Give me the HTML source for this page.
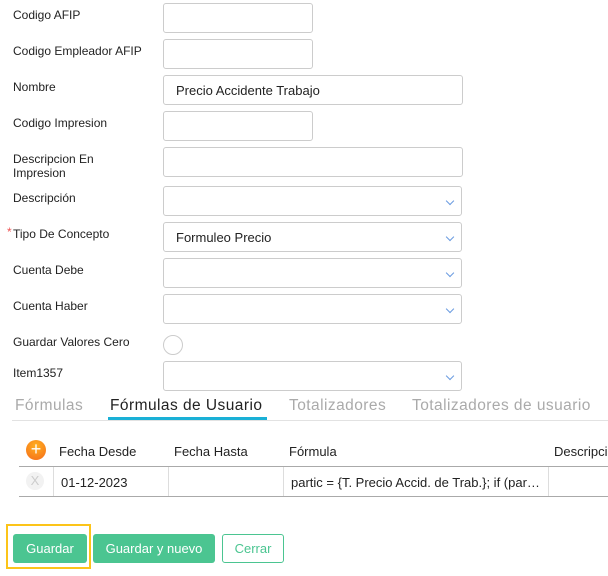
<!DOCTYPE html>
<html><head><meta charset="utf-8"><style>
*{box-sizing:border-box;margin:0;padding:0}
body{width:608px;height:576px;background:#fff;position:relative;overflow:hidden;font-family:"Liberation Sans",sans-serif;color:#212529}
.l{position:absolute;left:13px;font-size:12px;line-height:14px;color:#222}
.i{position:absolute;left:163px;height:30px;border:1px solid #ccc;border-radius:3px;background:#fff;font-size:13px;line-height:30px;padding-left:12px;color:#222}
.s:after{content:"";position:absolute;right:8px;top:11px;width:5px;height:5px;border-right:1.5px solid #6a9be0;border-bottom:1.5px solid #6a9be0;transform:rotate(45deg)}
.t{position:absolute;top:397px;font-size:15.5px;letter-spacing:0.45px;color:#aaa}
.h{position:absolute;top:444px;font-size:13px;color:#222}
.c{position:absolute;top:475px;font-size:13px;color:#222}
.v{position:absolute;top:467px;width:1px;height:29px;background:#ddd}
.b{position:absolute;top:534px;height:29px;border-radius:3px;font-size:13px;line-height:29px;text-align:center;color:#fff;background:#4bc591}
</style></head><body>
<div class="l" style="top:8px">Codigo AFIP</div>
<div class="i" style="top:3px;width:150px"></div>
<div class="l" style="top:44px">Codigo Empleador AFIP</div>
<div class="i" style="top:39px;width:150px"></div>
<div class="l" style="top:80px">Nombre</div>
<div class="i" style="top:75px;width:300px">Precio Accidente Trabajo</div>
<div class="l" style="top:116px">Codigo Impresion</div>
<div class="i" style="top:111px;width:150px"></div>
<div class="l" style="top:152px">Descripcion En<br>Impresion</div>
<div class="i" style="top:147px;width:300px"></div>
<div class="l" style="top:191px">Descripción</div>
<div class="i s" style="top:186px;width:299px"></div>
<div class="l" style="top:227px"><span style="color:#e55;position:absolute;left:-6px;top:-2px">*</span>Tipo De Concepto</div>
<div class="i s" style="top:222px;width:299px">Formuleo Precio</div>
<div class="l" style="top:263px">Cuenta Debe</div>
<div class="i s" style="top:258px;width:299px"></div>
<div class="l" style="top:299px">Cuenta Haber</div>
<div class="i s" style="top:294px;width:299px"></div>
<div class="l" style="top:335px">Guardar Valores Cero</div>
<div style="position:absolute;left:163px;top:335px;width:20px;height:20px;border:1px solid #ccc;border-radius:50%"></div>
<div class="l" style="top:366px">Item1357</div>
<div class="i s" style="top:361px;width:299px"></div>

<div class="t" style="left:15px">Fórmulas</div>
<div class="t" style="left:110px;color:#222">Fórmulas de Usuario</div>
<div class="t" style="left:289px">Totalizadores</div>
<div class="t" style="left:412px">Totalizadores de usuario</div>
<div style="position:absolute;left:12px;top:420px;width:596px;height:1px;background:#e2e2e2"></div>
<div style="position:absolute;left:108px;top:417px;width:159px;height:3px;background:#1ab0d6"></div>

<div style="position:absolute;left:26px;top:440px;width:20px;height:20px;border-radius:50%;background:radial-gradient(circle at 50% 30%,#ffb020,#f56a1a);color:#fff;font-size:18px;line-height:19px;text-align:center">+</div>
<div class="h" style="left:59px">Fecha Desde</div>
<div class="h" style="left:174px">Fecha Hasta</div>
<div class="h" style="left:289px">Fórmula</div>
<div class="h" style="left:554px">Descripci</div>
<div style="position:absolute;left:19px;top:466px;width:589px;height:1px;background:#aaa"></div>
<div style="position:absolute;left:19px;top:496px;width:589px;height:1px;background:#aaa"></div>
<div style="position:absolute;left:26px;top:472px;width:18px;height:18px;border-radius:50%;background:#f2f2f2;color:#ccc;font-size:13px;line-height:18px;text-align:center">X</div>
<div class="v" style="left:53px"></div><div class="v" style="left:168px"></div><div class="v" style="left:283px"></div><div class="v" style="left:548px"></div>
<div class="c" style="left:61px">01-12-2023</div>
<div class="c" style="left:291px">partic = {T. Precio Accid. de Trab.}; if (par…</div>

<div style="position:absolute;left:6px;top:524px;width:85px;height:45px;border:2px solid #fcc419"></div>
<div class="b" style="left:13px;width:74px">Guardar</div>
<div class="b" style="left:93px;width:122px">Guardar y nuevo</div>
<div class="b" style="left:222px;width:62px;background:#fff;border:1px solid #4bc591;color:#4bc591;line-height:27px">Cerrar</div>
</body></html>
